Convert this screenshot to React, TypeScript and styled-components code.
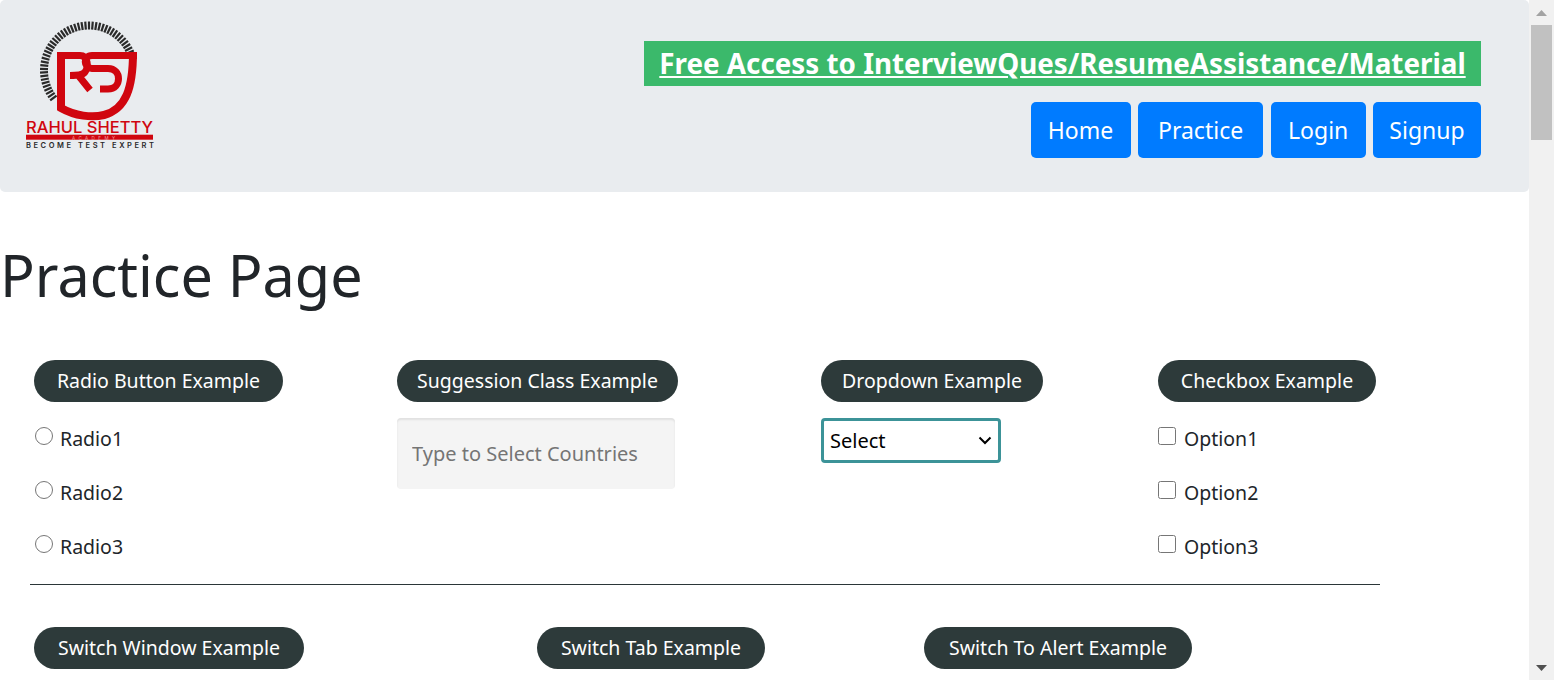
import React from "react";
import styled, { createGlobalStyle } from "styled-components";

const GlobalStyle = createGlobalStyle`
  html, body {
    margin: 0;
    height: 680px;
    overflow: hidden;
    background: #fff;
  }
  body {
    font-family: "Noto Sans", "Lato", sans-serif;
    color: #212529;
  }
`;

const Shell = styled.div`
  display: flex;
  width: 1554px;
  height: 680px;
  overflow: hidden;
`;

const Page = styled.div`
  width: 1529px;
  flex: none;
`;

const Header = styled.header`
  height: 192px;
  box-sizing: border-box;
  background: #e9ecef;
  border-radius: 5px;
  padding: 16px 48px 0 24px;
  display: flex;
  justify-content: space-between;
`;

const HeaderRight = styled.div`
  display: flex;
  flex-direction: column;
  align-items: flex-end;
  padding-top: 25px;
  gap: 16px;
`;

const Promo = styled.a`
  display: block;
  width: 837px;
  box-sizing: border-box;
  height: 45px;
  line-height: 45px;
  text-align: center;
  background: #3bb96b;
  color: #fff;
  font-size: 27.8px;
  font-weight: 700;
  text-decoration: underline;
  white-space: nowrap;
`;

const Nav = styled.nav`
  display: flex;
  gap: 7.33px;
`;

const NavButton = styled.button<{ $width: number }>`
  width: ${(p) => p.$width}px;
  height: 56px;
  padding: 0;
  border: 0;
  border-radius: 5px;
  background: #007bff;
  color: #fff;
  font: 23px "Noto Sans", sans-serif;
`;

const Title = styled.h1`
  margin: 0;
  padding-top: 46px;
  height: 168px;
  box-sizing: border-box;
  font-size: 57.5px;
  font-weight: 400;
  line-height: 74px;
`;

const Section = styled.section`
  width: 1350px;
  margin-left: 30px;
`;

const TopGrid = styled.div`
  display: grid;
  grid-template-columns: 363px 424px 337px 1fr;
  height: 224px;
  padding-left: 4px;
  border-bottom: 1px solid #2b3638;
`;

const BottomRow = styled.div`
  display: grid;
  grid-template-columns: 503px 387px 1fr;
  justify-items: start;
  padding: 42px 0 0 4px;
`;

const Column = styled.div`
  display: flex;
  flex-direction: column;
  align-items: flex-start;
`;

const Badge = styled.div<{ $width: number }>`
  width: ${(p) => p.$width}px;
  height: 42px;
  line-height: 42px;
  text-align: center;
  background: #2d3a3a;
  color: #fff;
  border-radius: 21px;
  font-size: 19.5px;
  white-space: nowrap;
`;

const Options = styled.div`
  display: flex;
  flex-direction: column;
  margin-top: 9px;
`;

const OptionRow = styled.label`
  display: flex;
  align-items: center;
  height: 54px;
  font-size: 19.5px;
  color: #212529;
`;

const Radio = styled.input.attrs({ type: "radio" })`
  width: 18px;
  height: 18px;
  margin: -4px 7px 0 1px;
`;

const Check = styled.input.attrs({ type: "checkbox" })`
  width: 18px;
  height: 18px;
  margin: -4px 8px 0 0;
`;

const SuggestInput = styled.input`
  width: 278px;
  height: 71px;
  margin-top: 16px;
  box-sizing: border-box;
  padding: 0 15px;
  border: 0;
  border-radius: 4px;
  background: #f4f4f4;
  box-shadow: inset 0 2px 2px rgba(0, 0, 0, 0.08);
  font: 20px "Noto Sans", sans-serif;
  &::placeholder {
    color: #757575;
    opacity: 1;
  }
`;

const SelectWrap = styled.div`
  position: relative;
  margin-top: 16px;
  height: 45px;
`;

const Select = styled.select`
  appearance: none;
  width: 180px;
  height: 45px;
  box-sizing: border-box;
  border: 3px solid #3c9398;
  border-radius: 4px;
  background: #fff;
  color: #000;
  padding-left: 6px;
  font: 20px "Noto Sans", sans-serif;
`;

const Chevron = styled.svg`
  position: absolute;
  left: 157px;
  top: 18px;
  pointer-events: none;
`;

const ScrollTrack = styled.div`
  flex: none;
  width: 25px;
  height: 680px;
  background: #f1f1f1;
  display: flex;
  flex-direction: column;
  align-items: center;
`;

const ArrowBox = styled.div`
  height: 25px;
  display: flex;
  align-items: center;
  justify-content: center;
`;

const Thumb = styled.div`
  width: 21px;
  height: 115px;
  background: #c1c1c1;
  margin-bottom: auto;
`;

const LogoSvg = styled.svg`
  margin: -1px 0 0 -4px;
`;

const Logo = () => {
  const ticks = [];
  for (let a = -24; a >= -222; a -= 4.4) {
    const r = (a * Math.PI) / 180;
    ticks.push(
      <line
        key={a}
        x1={89 + 41 * Math.cos(r)}
        y1={70.5 + 41 * Math.sin(r)}
        x2={89 + 49 * Math.cos(r)}
        y2={70.5 + 49 * Math.sin(r)}
      />
    );
  }
  return (
    <LogoSvg width="140" height="140" viewBox="20 15 140 140">
      <g stroke="#2a2a2a" strokeWidth="2.2">{ticks}</g>
      <path
        d="M61 52 V108 C75 116 92 118 104 115 C126 109 133 88 133 52"
        fill="none"
        stroke="#d0060f"
        strokeWidth="8"
      />
      <path
        d="M57 55.5 H80 C88 55.5 89 67 85 72 C83 75 78 75.5 70 75.5 M78 75 L90 90"
        fill="none"
        stroke="#d0060f"
        strokeWidth="7"
      />
      <path
        d="M137 55.5 H92 C83 55.5 83 68 92 68.5 H108 C122 68.5 122 89 108 89 H100"
        fill="none"
        stroke="#d0060f"
        strokeWidth="7"
      />
      <text x="26" y="133" fontFamily="Inter, sans-serif" fontWeight="500" fontSize="16.5" fill="#d0060f" textLength="127" lengthAdjust="spacingAndGlyphs">
        RAHUL SHETTY
      </text>
      <rect x="26" y="134.7" width="127" height="5" fill="#d0060f" />
      <text x="72" y="139.5" fontFamily="Inter, sans-serif" fontSize="4.5" fill="#f3a0a0" textLength="43">
        ACADEMY
      </text>
      <text x="26" y="147.5" fontFamily="Inter, sans-serif" fontWeight="600" fontSize="7.5" fill="#2a2a2a" textLength="128">
        BECOME TEST EXPERT
      </text>
    </LogoSvg>
  );
};

export default function App() {
  return (
    <Shell>
      <GlobalStyle />
      <Page>
        <Header>
          <Logo />
          <HeaderRight>
            <Promo>Free Access to InterviewQues/ResumeAssistance/Material</Promo>
            <Nav>
              <NavButton $width={100}>Home</NavButton>
              <NavButton $width={125.5}>Practice</NavButton>
              <NavButton $width={95}>Login</NavButton>
              <NavButton $width={108}>Signup</NavButton>
            </Nav>
          </HeaderRight>
        </Header>
        <Title>Practice Page</Title>
        <Section>
          <TopGrid>
            <Column>
              <Badge $width={249}>Radio Button Example</Badge>
              <Options>
                {["Radio1", "Radio2", "Radio3"].map((r) => (
                  <OptionRow key={r}>
                    <Radio name="radio" />
                    {r}
                  </OptionRow>
                ))}
              </Options>
            </Column>
            <Column>
              <Badge $width={281}>Suggession Class Example</Badge>
              <SuggestInput placeholder="Type to Select Countries" />
            </Column>
            <Column>
              <Badge $width={222}>Dropdown Example</Badge>
              <SelectWrap>
                <Select>
                  <option>Select</option>
                </Select>
                <Chevron width="14" height="9" viewBox="0 0 14 9">
                  <path d="M1.5 1.5L7 7l5.5-5.5" fill="none" stroke="#000" strokeWidth="2" />
                </Chevron>
              </SelectWrap>
            </Column>
            <Column>
              <Badge $width={218}>Checkbox Example</Badge>
              <Options>
                {["Option1", "Option2", "Option3"].map((o) => (
                  <OptionRow key={o}>
                    <Check />
                    {o}
                  </OptionRow>
                ))}
              </Options>
            </Column>
          </TopGrid>
          <BottomRow>
            <Badge $width={270}>Switch Window Example</Badge>
            <Badge $width={228}>Switch Tab Example</Badge>
            <Badge $width={268}>Switch To Alert Example</Badge>
          </BottomRow>
        </Section>
      </Page>
      <ScrollTrack>
        <ArrowBox>
          <svg width="11" height="6" viewBox="0 0 11 6"><path d="M5.5 0L11 6H0z" fill="#a3a3a3" /></svg>
        </ArrowBox>
        <Thumb />
        <ArrowBox>
          <svg width="11" height="6" viewBox="0 0 11 6"><path d="M0 0H11L5.5 6z" fill="#505050" /></svg>
        </ArrowBox>
      </ScrollTrack>
    </Shell>
  );
}
